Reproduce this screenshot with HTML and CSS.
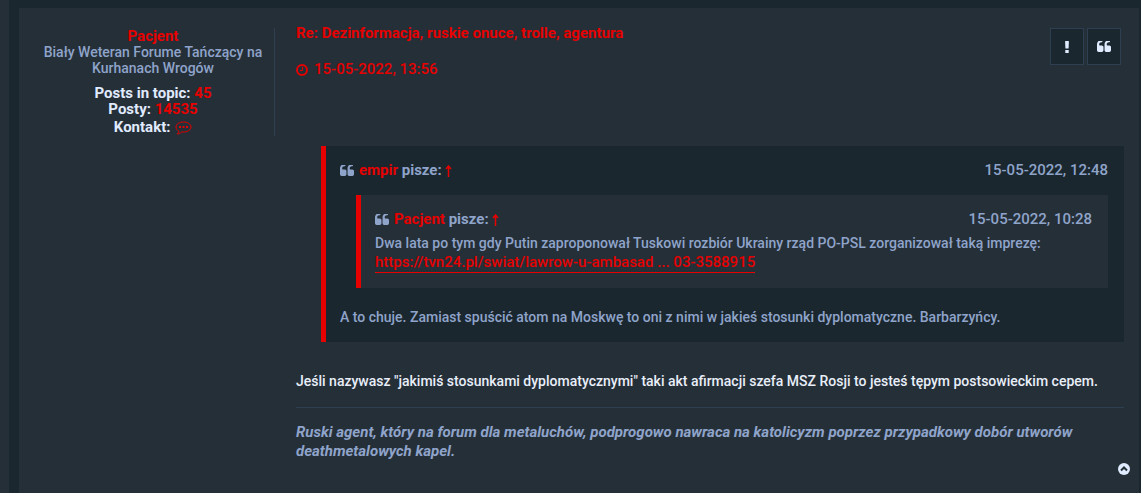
FILE: index.html
```html
<!DOCTYPE html>
<html lang="pl">
<head>
<meta charset="utf-8">
<meta name="viewport" content="width=device-width, initial-scale=1">
<title>Re: Dezinformacja, ruskie onuce, trolle, agentura</title>
<link rel="stylesheet" href="styles.css">
</head>
<body>
<svg class="defs" aria-hidden="true">
  <symbol id="quote" viewBox="64 256 1664 1280"><path d="M832 960v384q0 80-56 136t-136 56h-384q-80 0-136-56t-56-136v-704q0-104 40.500-198.500t109.500-163.500 163.500-109.500 198.500-40.500h64q26 0 45 19t19 45v128q0 26-19 45t-45 19h-64q-106 0-181 75t-75 181v32q0 40 28 68t68 28h224q80 0 136 56t56 136zm896 0v384q0 80-56 136t-136 56h-384q-80 0-136-56t-56-136v-704q0-104 40.500-198.500t109.500-163.500 163.500-109.500 198.500-40.500h64q26 0 45 19t19 45v128q0 26-19 45t-45 19h-64q-106 0-181 75t-75 181v32q0 40 28 68t68 28h224q80 0 136 56t56 136z"/></symbol>
</svg>
<main class="topic">
  <article class="post">
    <aside class="profile">
      <a class="name" href="#profile">Pacjent</a>
      <p class="rank">Biały Weteran Forume Tańczący na Kurhanach Wrogów</p>
      <dl class="stats">
        <div><dt>Posts in topic:</dt> <dd><a href="#topic-posts">45</a></dd></div>
        <div><dt>Posty:</dt> <dd><a href="#posts">14535</a></dd></div>
        <div class="contact"><dt>Kontakt:</dt> <dd><a href="#contact" aria-label="Kontakt z Pacjent"><svg class="bubble" viewBox="0 0 18 14"><path d="M9.500 1C5.400 1 2 3.200 2 6c0 1.700 1.100 3.200 2.900 4.100C4.700 11.400 4 12.200 3.200 13c2 0 3.600-1 4.600-2.100l1.700.1c4.100 0 7.500-2.200 7.500-5S13.600 1 9.500 1Z"/><path class="dots" d="M5 5h2v2H5zM8.500 5h2v2h-2zM12 5h2v2h-2z"/></svg></a></dd></div>
      </dl>
    </aside>
    <div class="body">
      <header class="head">
        <div>
          <h1 class="title"><a href="#post">Re: Dezinformacja, ruskie onuce, trolle, agentura</a></h1>
          <a class="posted" href="#post"><svg class="clock" viewBox="0 0 12 12"><circle cx="6" cy="6" r="5"/><path d="M6.500 3v3.500H4"/></svg><time>15-05-2022, 13:56</time></a>
        </div>
        <div class="tools">
          <button type="button" aria-label="Zgłoś post"><svg class="bang" viewBox="0 0 4 12"><path d="M.1.500Q.1 0 .6 0h2.800q.5 0 .5.500L3.600 7.500H.4zM.3 9h3.400v3H.3z"/></svg></button>
          <button type="button" aria-label="Cytuj"><svg class="quote-mark"><use href="#quote"/></svg></button>
        </div>
      </header>
      <blockquote class="quote outer">
        <cite><svg class="quote-mark"><use href="#quote"/></svg><span><a href="#empir">empir</a> pisze: <a href="#quoted" aria-label="Zobacz post"><svg class="arrow" viewBox="0 0 7 12"><path d="M3.500 12V1M1 4l2.500-3L6 4"/></svg></a></span><time>15-05-2022, 12:48</time></cite>
        <blockquote class="quote inner">
          <cite><svg class="quote-mark"><use href="#quote"/></svg><span><a href="#profile">Pacjent</a> pisze: <a href="#source" aria-label="Zobacz post"><svg class="arrow" viewBox="0 0 7 12"><path d="M3.500 12V1M1 4l2.500-3L6 4"/></svg></a></span><time>15-05-2022, 10:28</time></cite>
          <p>Dwa lata po tym gdy Putin zaproponował Tuskowi rozbiór Ukrainy rząd PO-PSL zorganizował taką imprezę:</p>
          <a class="link" href="#tvn24">https://tvn24.pl/swiat/lawrow-u-ambasad ... 03-3588915</a>
        </blockquote>
        <p>A to chuje. Zamiast spuścić atom na Moskwę to oni z nimi w jakieś stosunki dyplomatyczne. Barbarzyńcy.</p>
      </blockquote>
      <p class="message">Jeśli nazywasz "jakimiś stosunkami dyplomatycznymi" taki akt afirmacji szefa MSZ Rosji to jesteś tępym postsowieckim cepem.</p>
      <p class="signature">Ruski agent, który na forum dla metaluchów, podprogowo nawraca na katolicyzm poprzez przypadkowy dobór utworów deathmetalowych kapel.</p>
      <a class="top" href="#top" aria-label="Na górę"><svg viewBox="0 0 12 12"><circle cx="6" cy="6" r="6"/><path d="M3 7.500l3-3 3 3"/></svg></a>
    </div>
  </article>
</main>
</body>
</html>
```
FILE: styles.css
```css
* { box-sizing: border-box; }
body {
  margin: 0;
  background: #252f38;
  color: #8fa4ca;
  font: 500 14px/19px Roboto, "Liberation Sans", sans-serif;
}
p, h1, dl, dd, blockquote { margin: 0; }
a { color: #e60000; text-decoration: none; }
.defs { display: none; }
.topic {
  min-height: 100vh;
  margin-left: 9px;
  padding: 8px 2px 0 10px;
  background: #1b272f;
  display: flex;
}
.post {
  flex: 1;
  display: flex;
  align-items: flex-start;
  gap: 21px;
  padding: 20px 15px 0 12px;
  background: #252f38;
}
.profile {
  flex: 0 0 244px;
  min-height: 108px;
  padding: 0 0 0 1px;
  border-right: 1px solid #2f3f52;
  line-height: 16px;
  text-align: center;
}
.name { font-size: 15px; font-weight: 700; }
.rank { padding: 0 8px; }
.stats { margin-top: 9px; color: #e0ebff; font-size: 15px; font-weight: 700; }
.stats dt, .stats dd { display: inline; }
.contact { padding-top: 2px; }
.bubble { width: 18px; height: 14px; vertical-align: -3px; fill: none; stroke: #e60000; }
.bubble .dots { fill: #e60000; stroke: none; }
.body { flex: 1; min-width: 0; }
.head { display: flex; justify-content: space-between; align-items: flex-start; margin-bottom: 67px; }
.title { margin: -4px 0 17px; font-size: 15px; line-height: 19px; }
.posted { display: flex; align-items: center; gap: 6px; font-size: 15px; }
.clock { width: 12px; height: 12px; fill: none; stroke: #e60000; stroke-width: 2; }
.clock path { stroke-width: 1; }
.tools { display: flex; gap: 3px; margin-right: 3px; }
.tools button {
  width: 34px;
  height: 37px;
  padding: 0;
  display: grid;
  place-items: center;
  background: #1b272f;
  border: 1px solid #2f3f52;
  color: #e0ebff;
}
.bang { width: 4px; height: 12px; fill: currentColor; }
.quote-mark { width: 14px; height: 11px; fill: currentColor; }
.quote { border-left: 5px solid #e60000; }
.outer { margin-left: 25px; padding: 15px 16px 15px 14px; background: #1b272f; }
.inner { margin: 15px 0 20px 16px; padding: 15px 16px 15px 14px; background: #252f38; }
.quote cite { display: flex; align-items: center; gap: 5px; font-size: 15px; font-style: normal; font-weight: 700; }
.quote cite time { margin-left: auto; font-weight: 500; }
.inner cite { margin-bottom: 5px; }
.arrow { width: 7px; height: 12px; vertical-align: -2px; fill: none; stroke: #e60000; stroke-width: 1.5; }
.link { display: inline-block; border-bottom: 1px solid #e60000; font-size: 15px; }
.message { margin: 30px 0 16px; color: #e8eef8; }
.signature { padding-top: 15px; border-top: 1px solid #2f3f52; font-size: 15px; font-style: italic; font-weight: 700; }
.top { display: block; width: 12px; height: 12px; margin: 2px -6px 0 auto; }
.top svg { display: block; width: 12px; height: 12px; }
.top circle { fill: #e0ebff; }
.top path { fill: none; stroke: #252f38; stroke-width: 2; }
```
